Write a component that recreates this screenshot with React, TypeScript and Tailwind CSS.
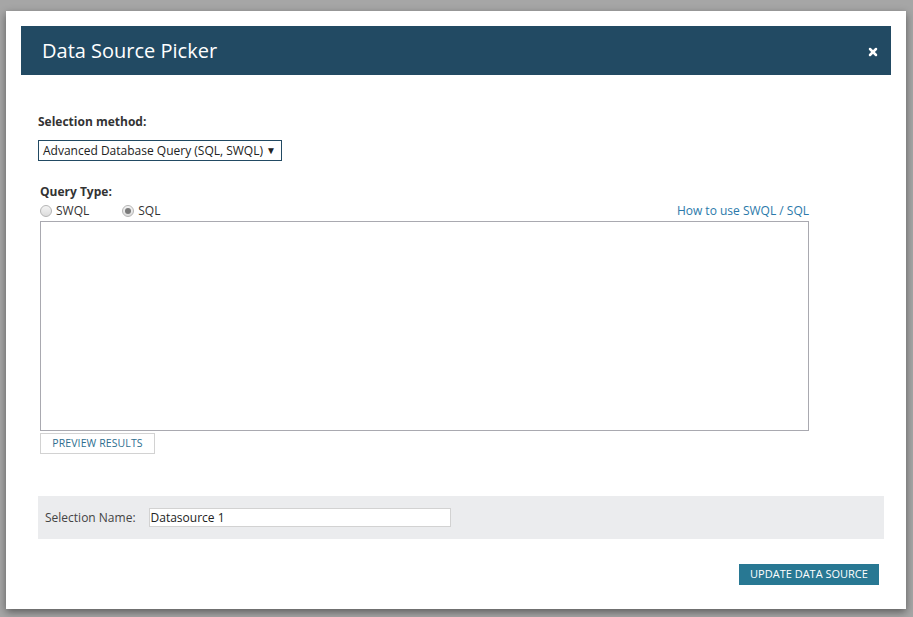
import { X } from "lucide-react";

function Radio({ checked, label }: { checked?: boolean; label: string }) {
  return (
    <label className="flex items-center gap-[4px]">
      <span className="w-[12px] h-[12px] rounded-full border border-[#b5b5b5] bg-gradient-to-b from-[#f4f4f4] to-[#dcdcdc] flex items-center justify-center">
        {checked && <span className="w-[6px] h-[6px] rounded-full bg-[#7a7a7a]" />}
      </span>
      <span>{label}</span>
    </label>
  );
}

export default function App() {
  return (
    <div
      className="w-[913px] h-[617px] bg-[#a6a6a6] pt-[11px] pl-[6px] overflow-hidden"
      style={{ fontFamily: '"Open Sans", "Noto Sans", sans-serif' }}
    >
      <div className="w-[900px] h-[598px] bg-white shadow-[0_3px_8px_rgba(0,0,0,0.45)] p-[15px] flex flex-col">
        <header className="h-[49px] bg-[#224a63] flex items-center justify-between pl-[21px] pr-[12px] shrink-0">
          <h1 className="text-white text-[20px] leading-none">Data Source Picker</h1>
          <X className="w-[12px] h-[12px] text-white mt-[2px]" strokeWidth={5} />
        </header>

        <div className="pl-[17px] text-[12px] text-[#333]">
          <div className="mt-[39px] font-bold leading-[16px]">Selection method:</div>
          <div className="mt-[10px] w-[244px] h-[21px] border border-[#224a63] flex items-center justify-between pl-[4px] pr-[5px] text-[#222]">
            <span>Advanced Database Query (SQL, SWQL)</span>
            <span className="text-[10px]">▼</span>
          </div>

          <div className="pl-[2px] w-[771px]">
            <div className="mt-[23px] font-bold leading-[16px]">Query Type:</div>
            <div className="flex items-center justify-between h-[21px] pt-[1px]">
              <div className="flex items-center gap-[33px]">
                <Radio label="SWQL" />
                <Radio label="SQL" checked />
              </div>
              <a className="text-[#2b79aa] text-[12px]">How to use SWQL / SQL</a>
            </div>
            <textarea className="block w-[769px] h-[210px] border border-[#a9a9b0] resize-none outline-none" />
            <button className="mt-[2px] w-[115px] h-[21px] border border-[#d2d2d2] text-[#2e6e8f] text-[10.5px] uppercase tracking-[0.1px]">
              Preview Results
            </button>
          </div>

          <div className="mt-[42px] w-[846px] h-[43px] bg-[#ebecee] flex items-center pl-[7px]">
            <span className="text-[12px] text-[#444]">Selection Name:</span>
            <input
              className="ml-[13px] w-[302px] h-[19px] border border-[#d2d2d2] bg-white px-[1px] text-[12px] text-[#222] outline-none"
              defaultValue="Datasource 1"
            />
          </div>

          <div className="w-[841px] flex justify-end mt-[25px]">
            <button className="w-[140px] h-[21px] bg-[#287893] text-white text-[11px] uppercase">
              Update Data Source
            </button>
          </div>
        </div>
      </div>
    </div>
  );
}
